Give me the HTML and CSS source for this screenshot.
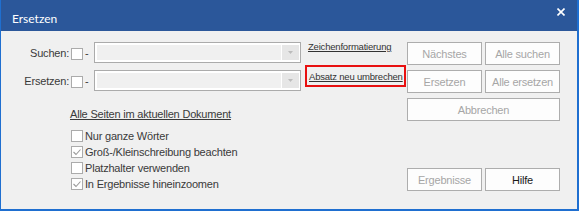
FILE: index.html
```html
<!DOCTYPE html>
<html lang="de">
<head>
<meta charset="utf-8">
<title>Ersetzen</title>
<link rel="stylesheet" href="styles.css">
</head>
<body>
<div class="window">
  <div class="titlebar">
    <span class="title">Ersetzen</span>
    <span class="close"><svg width="8" height="8" viewBox="0 0 8 8"><path d="M0.5 0.5 L7.5 7.5 M7.5 0.5 L0.5 7.5" stroke="#fff" stroke-width="1.6" fill="none"/></svg></span>
  </div>
  <div class="content">
    <div class="left">
      <div class="top">
        <div class="fields">
          <div class="field">
            <span class="label">Suchen:</span>
            <span class="cb field-cb"></span>
            <span class="dash">-</span>
            <div class="combo"><div class="combo-field"></div><div class="combo-btn"><svg width="5" height="3" viewBox="0 0 5 3"><polygon points="0,0 5,0 2.5,3" fill="#bcbcbc"/></svg></div></div>
          </div>
          <div class="field">
            <span class="label">Ersetzen:</span>
            <span class="cb field-cb"></span>
            <span class="dash">-</span>
            <div class="combo"><div class="combo-field"></div><div class="combo-btn"><svg width="5" height="3" viewBox="0 0 5 3"><polygon points="0,0 5,0 2.5,3" fill="#bcbcbc"/></svg></div></div>
          </div>
        </div>
        <div class="links">
          <a class="link link-first">Zeichenformatierung</a>
          <a class="link link-boxed">Absatz neu umbrechen</a>
        </div>
      </div>
      <div class="options">
        <div class="scope">Alle Seiten im aktuellen Dokument</div>
        <div class="opt"><span class="cb"></span><span>Nur ganze Wörter</span></div>
        <div class="opt"><span class="cb"><svg width="10" height="10" viewBox="0 0 10 10"><polyline points="1.5,5 4,7.5 8.5,2.5" stroke="#9a9a9a" stroke-width="1.1" fill="none"/></svg></span><span>Groß-/Kleinschreibung beachten</span></div>
        <div class="opt"><span class="cb"></span><span>Platzhalter verwenden</span></div>
        <div class="opt"><span class="cb"><svg width="10" height="10" viewBox="0 0 10 10"><polyline points="1.5,5 4,7.5 8.5,2.5" stroke="#9a9a9a" stroke-width="1.1" fill="none"/></svg></span><span>In Ergebnisse hineinzoomen</span></div>
      </div>
    </div>
    <div class="buttons">
      <div class="btn-grid">
        <button class="btn">Nächstes</button>
        <button class="btn">Alle suchen</button>
        <button class="btn">Ersetzen</button>
        <button class="btn">Alle ersetzen</button>
        <button class="btn wide">Abbrechen</button>
      </div>
      <div class="btn-grid bottom">
        <button class="btn">Ergebnisse</button>
        <button class="btn enabled">Hilfe</button>
      </div>
    </div>
  </div>
</div>
</body>
</html>
```
FILE: styles.css
```css
html, body {
  margin: 0;
  padding: 0;
}
body {
  width: 579px;
  height: 211px;
  overflow: hidden;
  background: #f0f0f0;
  font-family: "Liberation Sans", Arial, sans-serif;
  font-size: 11px;
  color: #3a3a3a;
  letter-spacing: -0.2px;
}
.window {
  width: 579px;
  height: 211px;
  box-sizing: border-box;
  border-style: solid;
  border-color: #1f6fd0;
  border-width: 0 2px 2px 1px;
  display: flex;
  flex-direction: column;
}
.titlebar {
  height: 31px;
  flex: none;
  background: #2b579a;
  color: #fff;
  display: flex;
  align-items: flex-start;
  justify-content: space-between;
  padding-left: 11px;
}
.title {
  font-family: Lato, "Liberation Sans", sans-serif;
  font-size: 12px;
  line-height: 14px;
  letter-spacing: 0;
  margin-top: 12px;
}
.close {
  margin: 8px 12px 0 0;
  display: flex;
}
.content {
  flex: 1;
  display: flex;
  padding-top: 11px;
}
.left {
  width: 406px;
}
.top {
  display: flex;
  align-items: flex-start;
}
.fields {
  display: flex;
  flex-direction: column;
  gap: 7px;
}
.field {
  display: flex;
  align-items: center;
  height: 21px;
}
.label {
  width: 68px;
  text-align: right;
}
.cb {
  width: 12px;
  height: 12px;
  box-sizing: border-box;
  border: 1px solid #ababab;
  background: #fff;
  display: flex;
  align-items: center;
  justify-content: center;
  flex: none;
}
.field-cb {
  margin-left: 2px;
  align-self: flex-start;
  margin-top: 6px;
}
.dash {
  width: 11px;
  padding-left: 2px;
  box-sizing: border-box;
}
.combo {
  width: 207px;
  height: 21px;
  box-sizing: border-box;
  border: 1px solid #ababab;
  background: #fff;
  padding: 2px 1px 2px 2px;
  display: flex;
  gap: 1px;
}
.combo-field {
  flex: 1;
  background: #f0f0f0;
}
.combo-btn {
  width: 17px;
  background: #e6e6e6;
  display: flex;
  align-items: center;
  justify-content: center;
}
.links {
  margin-left: 4px;
  width: 101px;
  display: flex;
  flex-direction: column;
}
.link {
  font-size: 9.5px;
  color: #333;
  text-decoration: underline;
  white-space: nowrap;
}
.link-first {
  line-height: 12px;
  margin-top: -1px;
  padding-left: 3px;
}
.link-boxed {
  margin-top: 12px;
  height: 22px;
  box-sizing: border-box;
  border: 2px solid #e81010;
  padding-left: 2px;
  display: flex;
  align-items: center;
}
.options {
  margin-left: 69px;
  margin-top: 17px;
}
.scope {
  line-height: 13px;
  text-decoration: underline;
  margin-bottom: 7px;
}
.opt {
  display: flex;
  align-items: center;
  height: 16px;
}
.opt .cb {
  margin-left: 1px;
  margin-right: 2px;
}
.buttons {
  width: 153px;
  display: flex;
  flex-direction: column;
}
.btn-grid {
  display: grid;
  grid-template-columns: 75px 75px;
  column-gap: 3px;
  row-gap: 5px;
}
.btn {
  height: 23px;
  margin: 0;
  padding: 0;
  border: 1px solid #adadad;
  background: #fdfdfd;
  font: inherit;
  letter-spacing: -0.2px;
  color: #a6a6a6;
}
.wide {
  grid-column: 1 / 3;
}
.bottom {
  margin-top: 47px;
}
.enabled {
  color: #1a1a1a;
}
```
